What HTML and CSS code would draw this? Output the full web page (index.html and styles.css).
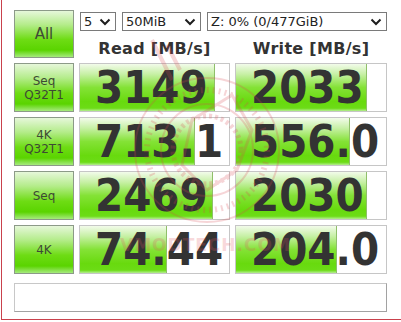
FILE: index.html
```html
<!DOCTYPE html>
<html lang="en">
<head>
    <meta charset="UTF-8">
    <title>CrystalDiskMark</title>
    <link rel="stylesheet" href="styles.css">
</head>
<body>
    <div class="window">
        <div class="grid">
            <div class="btn btn-all">All</div>
            <div class="top">
                <div class="selects">
                    <div class="select sel-count">5<svg class="chev" viewBox="0 0 12 8"><polyline points="1.5,1.5 6,6 10.5,1.5"/></svg></div>
                    <div class="select sel-size">50MiB<svg class="chev" viewBox="0 0 12 8"><polyline points="1.5,1.5 6,6 10.5,1.5"/></svg></div>
                    <div class="select sel-drive">Z: 0% (0/477GiB)<svg class="chev" viewBox="0 0 12 8"><polyline points="1.5,1.5 6,6 10.5,1.5"/></svg></div>
                </div>
                <div class="heads">
                    <div>Read [MB/s]</div>
                    <div>Write [MB/s]</div>
                </div>
            </div>

            <div class="btn">Seq<br>Q32T1</div>
            <div class="meter" style="--w:134px"><span class="val">3149</span></div>
            <div class="meter" style="--w:130px"><span class="val">2033</span></div>

            <div class="btn">4K<br>Q32T1</div>
            <div class="meter" style="--w:114px"><span class="val">713.1</span></div>
            <div class="meter" style="--w:113px"><span class="val">556.0</span></div>

            <div class="btn">Seq</div>
            <div class="meter" style="--w:132px"><span class="val">2469</span></div>
            <div class="meter" style="--w:130px"><span class="val">2030</span></div>

            <div class="btn">4K</div>
            <div class="meter" style="--w:86px"><span class="val">74.44</span></div>
            <div class="meter" style="--w:100px"><span class="val">204.0</span></div>
        </div>

        <div class="comment"></div>

        <!-- watermark over the results -->
        <svg class="watermark" viewBox="0 0 400 320">
            <g fill="none" stroke="#d9454f">
                <circle cx="205" cy="150" r="72" stroke-width="2"/>
                <circle cx="205" cy="150" r="60" stroke-width="6" stroke-dasharray="2 4"/>
                <circle cx="205" cy="150" r="46" stroke-width="2"/>
                <circle cx="205" cy="150" r="34" stroke-width="5" stroke-dasharray="3 3"/>
                <path d="M170 80 L150 40 M178 70 L165 45" stroke-width="4"/>
                <path d="M230 95 L250 130 L235 170 L205 190 L180 165 L190 120 Z" stroke-width="3"/>
            </g>
            <text x="118" y="251" class="wm-text">VMODTECH.COM</text>
        </svg>
    </div>
</body>
</html>
```

FILE: styles.css
```css
/* CrystalDiskMark window */
* { margin: 0; padding: 0; box-sizing: border-box; }
body { background: #fff; font-family: 'DejaVu Sans', Verdana, sans-serif; color: #333; }

.window {
    position: relative;
    width: 400px;
    height: 320px;
    margin-left: 1px;
    padding: 10px 0 0 12px;
    border-left: 1px solid #c9414c;
    border-bottom: 1px solid #c9414c;
    overflow: hidden;
}

.grid {
    display: grid;
    grid-template-columns: 60px 151px 152px;
    grid-template-rows: 48px repeat(4, 49px);
    column-gap: 5px;
    row-gap: 5px;
}

/* ЗЕЛЁНЫЕ КНОПКИ */
.btn {
    display: flex;
    align-items: center;
    justify-content: center;
    text-align: center;
    font-size: 12px;
    line-height: 14px;
    color: #3d4a34;
    border: 1px solid #8c9a88;
    background: linear-gradient(180deg, #e6f7da 0%, #b4ec8a 30%, #6edc14 62%, #5ad400 85%, #a6ea7e 100%);
}
.btn-all { font-size: 15px; color: #3f4a36; }

/* ВЫБОР ПАРАМЕТРОВ */
.top { grid-column: 2 / 4; display: flex; flex-direction: column; }
.selects { display: flex; gap: 6px; margin: 2px 0 0 1px; }
.select {
    height: 19px;
    display: flex;
    align-items: center;
    justify-content: space-between;
    padding: 0 4px 0 3px;
    font-size: 13px;
    color: #222;
    border: 1px solid #7a7a7a;
    background: #fff;
}
.sel-count { width: 36px; }
.sel-size { width: 79px; }
.sel-drive { width: 180px; }
.chev { width: 12px; height: 8px; }
.chev polyline { fill: none; stroke: #1e1e1e; stroke-width: 2; }

.heads {
    display: grid;
    grid-template-columns: 151px 152px;
    column-gap: 5px;
    padding-top: 9px;
    line-height: 18px;
    font-size: 16px;
    font-weight: bold;
    text-align: center;
    letter-spacing: 0.3px;
}

/* РЕЗУЛЬТАТЫ */
.meter {
    display: flex;
    align-items: center;
    padding-left: 15px;
    border: 1px solid #c6c6c6;
    background:
        linear-gradient(#8fbf6a, #8fbf6a) var(--w) 0 / 1px 100% no-repeat,
        linear-gradient(180deg, #f2fbea 0%, #c6f0a4 22%, #84e236 50%, #68da0e 80%, #6cdc16 94%, #b4ee90 100%) 0 0 / var(--w) 100% no-repeat,
        #fff;
}
.val {
    font-size: 45px;
    font-weight: bold;
    font-stretch: condensed;
    line-height: 47px;
    color: #333;
}

.comment {
    width: 373px;
    height: 29px;
    margin-top: 9px;
    border: 1px solid;
    border-color: #c8c8c8 #a2a2a2 #a2a2a2 #c8c8c8;
}

.watermark {
    position: absolute;
    left: 0;
    top: 0;
    width: 400px;
    height: 320px;
    opacity: 0.22;
    pointer-events: none;
}
.wm-text { font-family: 'DejaVu Sans', sans-serif; font-size: 17px; font-weight: bold; fill: #e05560; letter-spacing: 1px; }
```
